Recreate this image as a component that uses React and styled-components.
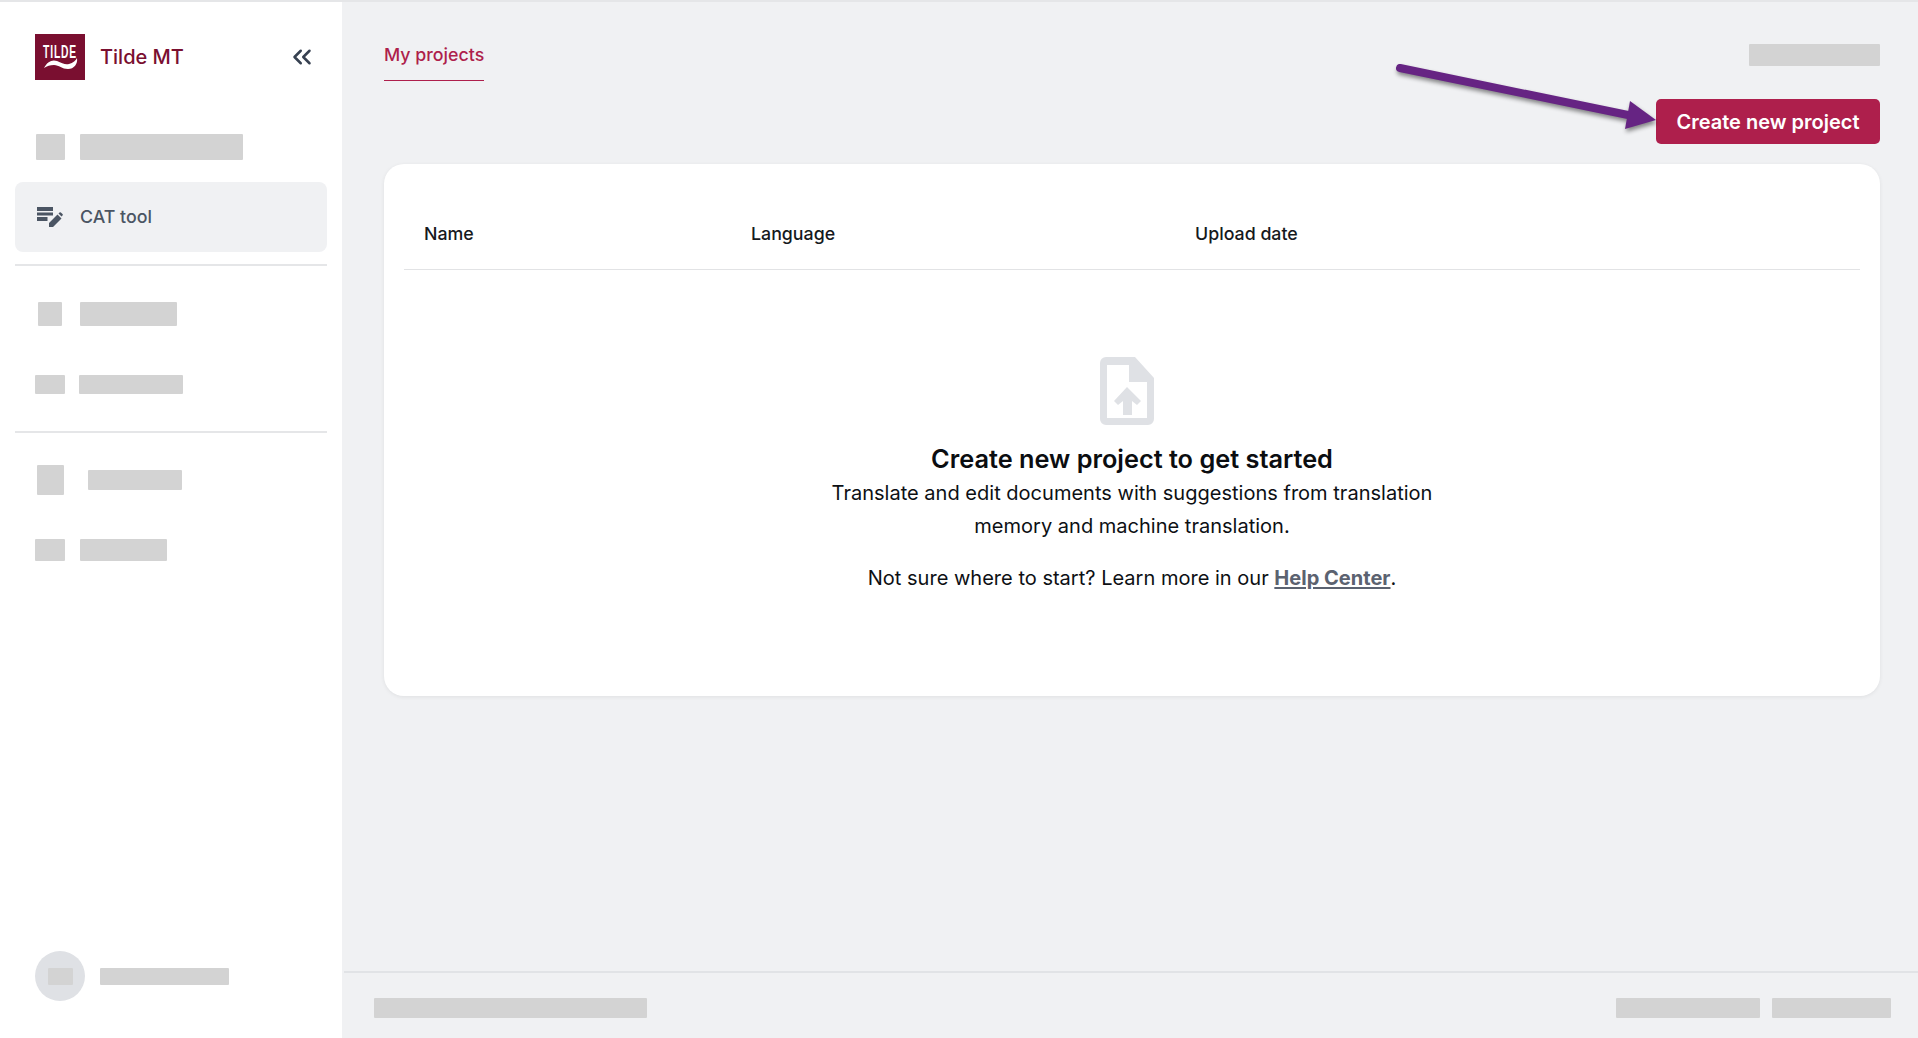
import React from 'react';
import styled, { createGlobalStyle } from 'styled-components';
import { ChevronsLeft } from 'lucide-react';

const GlobalStyle = createGlobalStyle`
  html, body {
    margin: 0;
    height: 100%;
    background: #f0f1f3;
    font-family: Inter, "Liberation Sans", sans-serif;
    overflow: hidden;
  }
`;

const Page = styled.div`
  display: grid;
  grid-template-columns: 342px 1fr;
  height: 1038px;
  box-sizing: border-box;
  border-top: 2px solid #e5e6e8;
`;

const Sidebar = styled.aside`
  display: flex;
  flex-direction: column;
  background: #fff;
  padding: 0 15px;
`;

const Brand = styled.div`
  display: flex;
  align-items: center;
  height: 46px;
  margin-top: 32px;
  margin-bottom: 32px;
  padding: 0 10px 0 20px;
`;

const BrandName = styled.span`
  margin-left: 15px;
  font-size: 20px;
  font-weight: 500;
  color: #7a0f30;
  flex: 1;
`;

const Collapse = styled.button`
  display: flex;
  padding: 0;
  border: 0;
  background: none;
  color: #374151;
`;

const NavRow = styled.div`
  display: flex;
  align-items: center;
  height: 70px;
  padding-left: 20px;
  border-radius: 8px;
  background: ${(props) => (props.$active ? '#f0f1f3' : 'transparent')};
`;

const IconSlot = styled.div`
  display: flex;
  justify-content: center;
  align-items: center;
  width: 30px;
  margin-right: 15px;
  color: #4b5563;
`;

const NavLabel = styled.span`
  padding-bottom: 2px;
  font-size: 17.8px;
  font-weight: 500;
  color: #4b5563;
`;

const Skeleton = styled.div`
  width: ${(props) => props.$w}px;
  height: ${(props) => props.$h}px;
  margin-left: ${(props) => props.$ml || 0}px;
  background: #d3d3d3;
  border-radius: 1px;
`;

const Divider = styled.hr`
  margin: 12px 0 ${(props) => props.$after}px;
  border: 0;
  border-top: 2px solid #e5e6e8;
`;

const SidebarFooter = styled.div`
  display: flex;
  align-items: center;
  margin-top: auto;
  margin-bottom: 37px;
  padding-left: 20px;
`;

const Avatar = styled.div`
  display: flex;
  justify-content: center;
  align-items: center;
  width: 50px;
  height: 50px;
  margin-right: 15px;
  border-radius: 50%;
  background: #dfe1e5;
`;

const Main = styled.main`
  display: flex;
  flex-direction: column;
  min-width: 0;
`;

const Content = styled.div`
  position: relative;
  flex: 1;
  padding: 0 38px 0 42px;
`;

const TopBar = styled.div`
  display: flex;
  justify-content: space-between;
  align-items: flex-start;
`;

const Tab = styled.div`
  margin-top: 37px;
  padding-bottom: 10px;
  border-bottom: 1px solid #ae1f4c;
  font-size: 17.8px;
  font-weight: 500;
  line-height: 31px;
  color: #ae1f4c;
`;

const TopActions = styled.div`
  display: flex;
  flex-direction: column;
  align-items: flex-end;
  padding-top: 42px;
`;

const CreateButton = styled.button`
  height: 45px;
  margin-top: 33px;
  padding: 0 20.5px;
  border: 0;
  border-radius: 5px;
  background: #ae1f4c;
  color: #fff;
  font-family: inherit;
  font-size: 20px;
  font-weight: 600;
`;

const ArrowMark = styled.svg`
  position: absolute;
  top: 0;
  left: 0;
  overflow: visible;
  pointer-events: none;
  filter: drop-shadow(1px 3px 2px rgba(0, 0, 0, 0.45));
`;

const Card = styled.section`
  display: flex;
  flex-direction: column;
  height: 532px;
  margin-top: 20px;
  padding: 0 20px;
  background: #fff;
  border-radius: 20px;
  box-shadow: 0 1px 4px rgba(0, 0, 0, 0.07);
`;

const TableHead = styled.div`
  display: grid;
  grid-template-columns: 327px 444px 1fr;
  align-items: center;
  height: 106px;
  padding: 34px 0 0 20px;
  border-bottom: 1px solid #e2e3e5;
  box-sizing: border-box;
  font-size: 17.8px;
  font-weight: 500;
  color: #16191d;
`;

const Empty = styled.div`
  display: flex;
  flex-direction: column;
  align-items: center;
  padding-top: 87px;
  color: #0d1014;
`;

const FileIcon = styled.svg`
  margin-right: 11px;
`;

const EmptyTitle = styled.h2`
  margin: 15px 0 0;
  font-size: 25.3px;
  font-weight: 600;
  line-height: 37px;
  color: #0b0d10;
`;

const EmptyText = styled.p`
  width: 640px;
  margin: 0;
  font-size: 20.04px;
  line-height: 33px;
  text-align: center;
`;

const EmptyHint = styled(EmptyText)`
  margin-top: 19px;
`;

const HelpLink = styled.a`
  color: #5b6270;
  font-weight: 700;
  text-decoration: underline;
`;

const Footer = styled.footer`
  display: flex;
  align-items: center;
  height: 67px;
  margin-left: 2px;
  padding: 5px 27px 0 30px;
  box-sizing: border-box;
  border-top: 2px solid #e1e3e6;
`;

const FooterRight = styled.div`
  display: flex;
  gap: 12px;
  margin-left: auto;
`;

const TildeLogo = () => (
  <svg width="50" height="46" viewBox="0 0 50 46">
    <rect width="50" height="46" fill="#7a0f30" />
    <text transform="translate(8 24) scale(0.86 1.5)" fontFamily="Liberation Sans, sans-serif" fontSize="12" fontWeight="700" letterSpacing="1" fill="#fff">
      TILDE
    </text>
    <path d="M9 34C12 28 17 25 22 27C27 29 30 31 34 30C38 29 41 26 42 24C43 30 39 35 33 35C27 35 24 31 19 31C15 31 12 32 9 34z" fill="#fff" />
  </svg>
);

const EditNoteIcon = () => (
  <svg width="26" height="20" viewBox="0 0 26 20" fill="#4b5563">
    <rect x="0" y="0" width="16" height="4" />
    <rect x="0" y="5.500" width="16" height="3" />
    <rect x="0" y="10" width="10.500" height="4" />
    <path d="M12 20v-4L20.500 7.500l4 4L16 20zM21.500 6.500l1-1a1 1 0 0 1 1.400 0l1.600 1.600a1 1 0 0 1 0 1.400l-1 1z" />
  </svg>
);

const FileUploadIcon = () => (
  <FileIcon width="54" height="68" viewBox="0 0 54 68">
    <path
      fillRule="evenodd"
      fill="#dfe1e5"
      d="M6 0h29l19 21v41a6 6 0 0 1-6 6H6a6 6 0 0 1-6-6V6a6 6 0 0 1 6-6zM7 8v53h40V25H29V8z"
    />
    <path fill="#dfe1e5" d="M27 30l14 14-4 4-5-4v14h-9V44l-5 4-4-4z" />
  </FileIcon>
);

const Arrow = () => (
  <ArrowMark width="300" height="100" viewBox="0 0 300 100">
    <path d="M1058 66L1286 113" stroke="#662483" strokeWidth="8" strokeLinecap="round" fill="none" />
    <path d="M1314 118L1288 99L1283 127z" fill="#662483" />
  </ArrowMark>
);

export default function App() {
  return (
    <>
      <GlobalStyle />
      <Page>
        <Sidebar>
          <Brand>
            <TildeLogo />
            <BrandName>Tilde MT</BrandName>
            <Collapse aria-label="Collapse">
              <ChevronsLeft size={30} strokeWidth={2} />
            </Collapse>
          </Brand>
          <NavRow>
            <IconSlot><Skeleton $w={29} $h={26} /></IconSlot>
            <Skeleton $w={163} $h={26} />
          </NavRow>
          <NavRow $active>
            <IconSlot><EditNoteIcon /></IconSlot>
            <NavLabel>CAT tool</NavLabel>
          </NavRow>
          <Divider $after={13} />
          <NavRow>
            <IconSlot><Skeleton $w={24} $h={24} /></IconSlot>
            <Skeleton $w={97} $h={24} />
          </NavRow>
          <NavRow>
            <IconSlot><Skeleton $w={30} $h={19} /></IconSlot>
            <Skeleton $w={104} $h={19} $ml={-1} />
          </NavRow>
          <Divider $after={12} />
          <NavRow>
            <IconSlot><Skeleton $w={27} $h={30} /></IconSlot>
            <Skeleton $w={94} $h={20} $ml={8} />
          </NavRow>
          <NavRow>
            <IconSlot><Skeleton $w={30} $h={22} /></IconSlot>
            <Skeleton $w={87} $h={22} />
          </NavRow>
          <SidebarFooter>
            <Avatar><Skeleton $w={25} $h={17} /></Avatar>
            <Skeleton $w={129} $h={17} />
          </SidebarFooter>
        </Sidebar>
        <Main>
          <Content>
            <TopBar>
              <Tab>My projects</Tab>
              <TopActions>
                <Skeleton $w={131} $h={22} />
                <CreateButton>Create new project</CreateButton>
              </TopActions>
            </TopBar>
            <Card>
              <TableHead>
                <span>Name</span>
                <span>Language</span>
                <span>Upload date</span>
              </TableHead>
              <Empty>
                <FileUploadIcon />
                <EmptyTitle>Create new project to get started</EmptyTitle>
                <EmptyText>
                  Translate and edit documents with suggestions from translation memory and machine translation.
                </EmptyText>
                <EmptyHint>
                  Not sure where to start? Learn more in our <HelpLink href="#">Help Center</HelpLink>.
                </EmptyHint>
              </Empty>
            </Card>
            <Arrow />
          </Content>
          <Footer>
            <Skeleton $w={273} $h={20} />
            <FooterRight>
              <Skeleton $w={144} $h={20} />
              <Skeleton $w={119} $h={20} />
            </FooterRight>
          </Footer>
        </Main>
      </Page>
    </>
  );
}
